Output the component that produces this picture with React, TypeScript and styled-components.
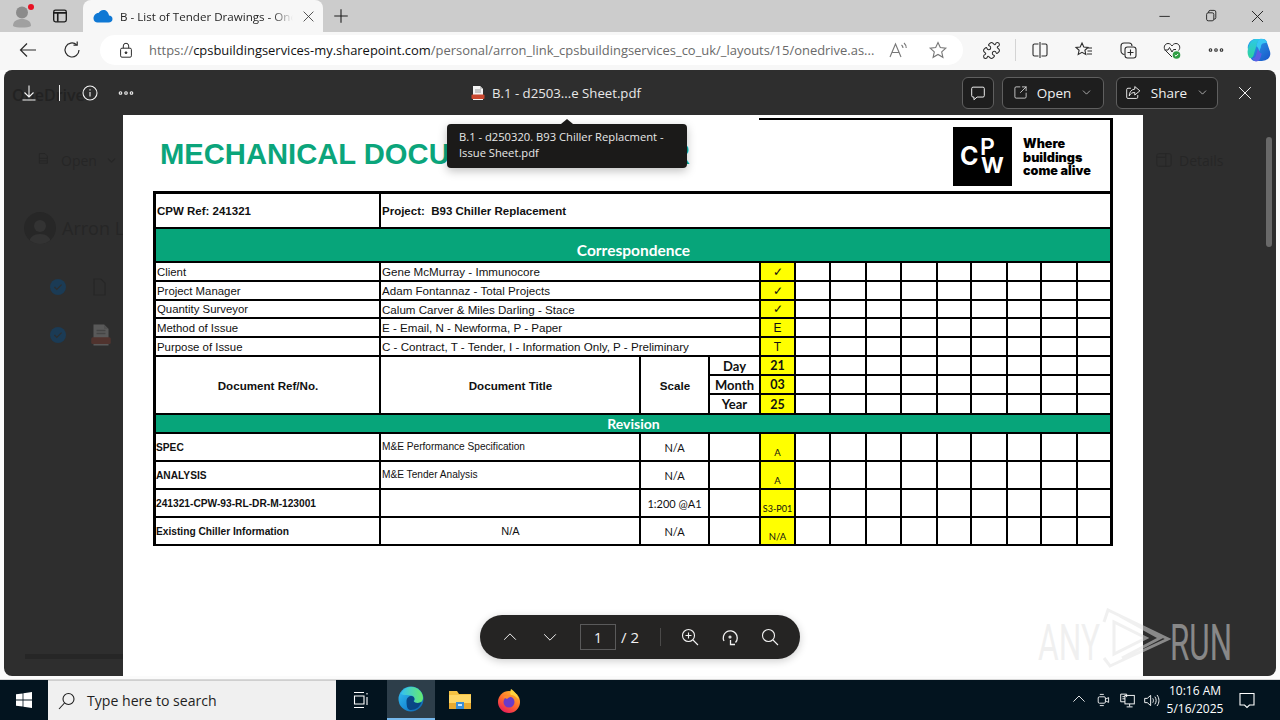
import React from 'react';
import styled, { createGlobalStyle } from 'styled-components';
import { ChevronDown, Puzzle, SquareArrowOutUpRight } from 'lucide-react';

const GlobalStyle = createGlobalStyle`
  html, body {
    margin: 0;
    padding: 0;
    overflow: hidden;
    background: #f7f7f7;
    font-family: "Open Sans", "Liberation Sans", sans-serif;
  }
  * { box-sizing: border-box; }
`;

const Screen = styled.div`
  width: 1280px;
  height: 720px;
  display: flex;
  flex-direction: column;
  overflow: hidden;
`;

const Glyph = styled.svg.attrs<{ $size?: number }>((p) => ({
  width: p.$size ?? 20,
  height: p.$size ?? 20,
  viewBox: '0 0 20 20',
  fill: 'none',
  stroke: 'currentColor',
  strokeWidth: 1.1,
}))<{ $size?: number }>`
  display: block;
  flex: none;
`;

/* browser chrome */
const TabBar = styled.div`
  height: 32px;
  flex: none;
  display: flex;
  align-items: flex-end;
  background: #cccccc;
  color: #1c1c1c;
`;

const Slot = styled.div<{ $w: number }>`
  width: ${(p) => p.$w}px;
  height: 32px;
  flex: none;
  display: flex;
  align-items: center;
  justify-content: center;
`;

const Profile = styled(Slot)`
  position: relative;
`;

const RedDot = styled.span`
  position: absolute;
  left: 28px;
  top: 4px;
  width: 6px;
  height: 6px;
  border-radius: 50%;
  background: #e81123;
`;

const Tab = styled.div`
  width: 240px;
  height: 32px;
  margin-left: 7px;
  flex: none;
  display: flex;
  align-items: center;
  padding-left: 10px;
  background: #f7f7f7;
  border-radius: 8px 8px 0 0;
`;

const TabTitle = styled.div`
  width: 173px;
  margin-left: 7px;
  font-size: 11.6px;
  color: #262626;
  white-space: nowrap;
  overflow: hidden;
  mask-image: linear-gradient(to right, #000 88%, transparent 100%);
`;

const TabClose = styled.div`
  margin-left: 8px;
  color: #333;
`;

const Spacer = styled.div`
  flex: 1;
`;

const AddressBar = styled.div`
  height: 38px;
  flex: none;
  display: flex;
  align-items: center;
  background: #f7f7f7;
  color: #2b2b2b;
  padding-left: 6px;
  padding-bottom: 2px;
`;

const UrlPill = styled.div`
  width: 863px;
  height: 30px;
  margin-left: 6px;
  margin-right: 6px;
  flex: none;
  display: flex;
  align-items: center;
  padding-left: 17px;
  background: #ffffff;
  border-radius: 15px;
`;

const UrlText = styled.div`
  width: 728px;
  margin-left: 14px;
  font-size: 12.95px;
  color: #6a6a6a;
  white-space: nowrap;
  overflow: hidden;
  b {
    font-weight: 400;
    color: #111;
  }
`;

const UrlIcons = styled.div`
  display: flex;
  align-items: center;
  gap: 20px;
  margin-left: 11px;
  color: #777;
`;

const BarSlot = styled(Slot)`
  height: 30px;
`;

const BarDivider = styled.div`
  width: 1px;
  height: 22px;
  margin: 0 2px;
  flex: none;
  background: #d4d4d4;
`;

/* viewer */
const Main = styled.div`
  flex: 1;
  min-height: 0;
  padding: 0 4px 3px;
  background: #fbfbfb;
  border-bottom: 1px solid #d8d8d8;
`;

const Viewer = styled.div`
  position: relative;
  height: 100%;
  display: flex;
  flex-direction: column;
  background: #2e2e2e;
  border-radius: 8px;
  overflow: hidden;
`;

const Toolbar = styled.div`
  position: relative;
  height: 45px;
  flex: none;
  display: flex;
  align-items: center;
  color: #f4f4f4;
`;

const ToolsLeft = styled.div`
  width: 466px;
  flex: none;
  display: flex;
  align-items: center;
  padding-left: 9px;
`;

const GhostBrand = styled.div`
  position: absolute;
  left: 8px;
  top: 14px;
  font-size: 16px;
  font-weight: 600;
  color: #222;
`;

const ToolSlot = styled.div<{ $ml?: number }>`
  position: relative;
  width: 32px;
  height: 32px;
  margin-left: ${(p) => p.$ml ?? 0}px;
  display: flex;
  align-items: center;
  justify-content: center;
`;

const ToolDivider = styled.div`
  position: relative;
  width: 1px;
  height: 16px;
  margin-left: 14px;
  background: #e8e8e8;
`;

const FileName = styled.div`
  display: flex;
  align-items: center;
  gap: 6px;
  padding-top: 1px;
  font-size: 13.2px;
  color: #e8e8e8;
  white-space: nowrap;
`;

const ToolsRight = styled.div`
  margin-left: auto;
  padding-right: 15px;
  display: flex;
  align-items: center;
`;

const ToolButton = styled.div<{ $w: number; $ml: number }>`
  width: ${(p) => p.$w}px;
  height: 32px;
  margin-left: ${(p) => p.$ml}px;
  display: flex;
  align-items: center;
  justify-content: center;
  gap: 9px;
  font-size: 13.5px;
  color: #f0f0f0;
  background: #1e1e1e;
  border: 1px solid #5f5f5f;
  border-radius: 6px;
`;

const Body = styled.div`
  flex: 1;
  min-height: 0;
  display: flex;
`;

const LeftGutter = styled.div`
  width: 119px;
  flex: none;
  display: flex;
  flex-direction: column;
  overflow: hidden;
  color: #262626;
`;

const GhostCommand = styled.div`
  height: 20px;
  margin: 35px 0 0 33px;
  display: flex;
  align-items: center;
  gap: 8px;
  font-size: 14px;
  white-space: nowrap;
`;

const GhostPerson = styled.div`
  margin: 42px 0 0 20px;
  height: 32px;
  display: flex;
  align-items: center;
  gap: 6px;
  font-size: 18px;
  white-space: nowrap;
`;

const GhostAvatar = styled.div`
  width: 32px;
  height: 32px;
  flex: none;
  display: flex;
  align-items: flex-end;
  justify-content: center;
  border-radius: 50%;
  background: #272727;
  overflow: hidden;
  color: #333;
`;

const GhostFile = styled.div<{ $top: number }>`
  height: 24px;
  margin: ${(p) => p.$top}px 0 0 46px;
  display: flex;
  align-items: center;
  gap: 23px;
`;

const GhostTick = styled.div`
  width: 16px;
  height: 16px;
  flex: none;
  display: flex;
  align-items: center;
  justify-content: center;
  border-radius: 50%;
  background: #1b3b55;
  color: #2e2e2e;
`;

const GhostScroll = styled.div`
  height: 5px;
  margin: auto 0 17px 21px;
  background: #262626;
`;

const RightGutter = styled.div`
  flex: 1;
  display: flex;
  justify-content: space-between;
  padding: 22px 4px 0 12px;
  color: #262626;
`;

const GhostDetails = styled.div`
  height: 46px;
  display: flex;
  align-items: center;
  gap: 6px;
  font-size: 14px;
`;

const ScrollThumb = styled.div`
  width: 6px;
  height: 110px;
  border-radius: 3px;
  background: #696969;
`;

const Page = styled.div`
  width: 1020px;
  flex: none;
  padding-left: 30px;
  background: #ffffff;
`;

const Masthead = styled.div`
  width: 960px;
  height: 76px;
  display: flex;
  justify-content: space-between;
`;

const DocTitle = styled.h1`
  margin: 0;
  padding: 22px 0 0 7px;
  font: 700 29.2px/34px "Liberation Sans", Arial, sans-serif;
  color: #0ba57b;
  white-space: nowrap;
`;

const LogoBox = styled.div`
  width: 354px;
  height: 73px;
  margin-top: 3px;
  flex: none;
  display: flex;
  align-items: flex-start;
  padding: 7px 0 0 194px;
  border-top: 2px solid #000;
  border-right: 3px solid #000;
`;

const Tagline = styled.div`
  margin: 10px 0 0 11px;
  font: 900 12.6px/13.5px Inter, "Liberation Sans", sans-serif;
  color: #000;
  white-space: nowrap;
`;

const Sheet = styled.div`
  width: 960px;
  display: grid;
  grid-template-columns: 223px 258px 67px 49px 33px 33px 34px 33px 34px 32px 34px 32px 34px 32px;
  grid-template-rows: 33px 32px 17px 17px 16px 17px 17px 17px 17px 18px 17px 26px 26px 26px 26px;
  gap: 2px;
  padding: 3px 3px 2px;
  background: #000;
  font-family: "Liberation Sans", Arial, sans-serif;
  color: #111;
`;

const Cell = styled.div<{ $span?: number; $rows?: number }>`
  grid-column: span ${(p) => p.$span ?? 1};
  grid-row: span ${(p) => p.$rows ?? 1};
  min-width: 0;
  display: flex;
  align-items: center;
  padding-left: 1px;
  background: #fff;
  font-size: 11.4px;
  white-space: nowrap;
  overflow: hidden;
`;

const ValueCell = styled(Cell)`
  font-size: 11.6px;
`;

const ProjectCell = styled(Cell)`
  font-size: 11.5px;
  font-weight: 700;
`;

const RefCell = styled(Cell)`
  padding-left: 0;
  font-size: 10.2px;
  font-weight: 700;
`;

const HeadCell = styled(Cell)`
  justify-content: center;
  font-weight: 700;
  font-size: 11.6px;
`;

const Band = styled(Cell)<{ $size: number; $pt: number }>`
  grid-column: 1 / -1;
  justify-content: center;
  padding-top: ${(p) => p.$pt}px;
  background: #07a57a;
  color: #fff;
  font: 700 ${(p) => p.$size}px Lato, "Liberation Sans", sans-serif;
`;

const DateLabel = styled(Cell)`
  justify-content: center;
  padding: 0;
  font: 700 13px Lato, "Liberation Sans", sans-serif;
`;

const Mark = styled(Cell)<{ $strong?: boolean }>`
  justify-content: center;
  padding: 0;
  background: #ffff00;
  font: ${(p) => (p.$strong ? '700 12.5px Lato' : '400 12px "Liberation Sans"')}, sans-serif;
`;

const RevMark = styled(Mark)<{ $small?: boolean }>`
  align-items: flex-end;
  padding-bottom: 2px;
  font: 400 ${(p) => (p.$small ? 9 : 9.5)}px Lato, sans-serif;
`;

const TitleCell = styled(Cell)<{ $center?: boolean }>`
  justify-content: ${(p) => (p.$center ? 'center' : 'flex-start')};
  align-items: ${(p) => (p.$center ? 'center' : 'flex-start')};
  padding-top: ${(p) => (p.$center ? 0 : 7)}px;
  font-size: ${(p) => (p.$center ? 11 : 10.15)}px;
`;

const ScaleCell = styled(Cell)`
  justify-content: center;
  padding: 0;
  font: 400 11px Lato, sans-serif;
`;

const ToolTip = styled.div`
  position: absolute;
  left: 443px;
  top: 54px;
  width: 240px;
  height: 44px;
  padding: 5px 12px;
  border-radius: 4px;
  background: #1b1a19;
  box-shadow: 0 3px 10px rgba(0, 0, 0, 0.25);
  font-size: 11.2px;
  line-height: 16px;
  color: #e8e8e8;
  &::before {
    content: '';
    position: absolute;
    left: 114px;
    top: -5px;
    border-left: 6px solid transparent;
    border-right: 6px solid transparent;
    border-bottom: 5px solid #1b1a19;
  }
`;

const PageControl = styled.div`
  position: absolute;
  left: 476px;
  top: 545px;
  width: 320px;
  height: 44px;
  display: flex;
  align-items: center;
  padding-left: 10px;
  border-radius: 22px;
  background: #252423;
  box-shadow: 0 2px 8px rgba(0, 0, 0, 0.2);
  color: #f2f2f2;
  font-size: 14px;
`;

const PageSlot = styled.div<{ $ml?: number }>`
  width: 40px;
  height: 40px;
  margin-left: ${(p) => p.$ml ?? 0}px;
  flex: none;
  display: flex;
  align-items: center;
  justify-content: center;
`;

const PageInput = styled.div`
  width: 36px;
  height: 26px;
  margin-left: 10px;
  flex: none;
  display: flex;
  align-items: center;
  justify-content: center;
  border: 1px solid #5a5a5a;
`;

const PageTotal = styled.div`
  width: 44px;
  padding-left: 5px;
  flex: none;
  font-size: 15px;
`;

const PageDivider = styled.div`
  width: 1px;
  height: 18px;
  flex: none;
  background: #4b4a49;
`;

const Watermark = styled.svg`
  position: absolute;
  left: 1034px;
  top: 538px;
  pointer-events: none;
`;

/* taskbar */
const TaskBar = styled.div`
  height: 40px;
  flex: none;
  display: flex;
  align-items: center;
  background: #03141f;
  color: #fff;
`;

const StartSlot = styled.div`
  width: 48px;
  height: 40px;
  flex: none;
  display: flex;
  align-items: center;
  justify-content: center;
`;

const SearchBox = styled.div`
  width: 288px;
  height: 40px;
  flex: none;
  display: flex;
  align-items: center;
  gap: 10px;
  padding-left: 9px;
  background: #f0f0f0;
  border-top: 1px solid #cfcfcf;
  color: #1f1f1f;
  font-size: 14.1px;
`;

const TaskSlot = styled.div<{ $active?: boolean; $w: number; $ml?: number }>`
  width: ${(p) => p.$w}px;
  height: 40px;
  margin-left: ${(p) => p.$ml ?? 0}px;
  flex: none;
  display: flex;
  align-items: center;
  justify-content: center;
  background: ${(p) => (p.$active ? '#2d3e4a' : 'transparent')};
  border-bottom: ${(p) => (p.$active ? '2px solid #76b9ed' : 'none')};
`;

const Tray = styled.div`
  margin-left: auto;
  display: flex;
  align-items: center;
  padding-right: 13px;
`;

const TraySlot = styled.div`
  width: 24px;
  height: 40px;
  flex: none;
  display: flex;
  align-items: center;
  justify-content: center;
`;

const Clock = styled.div`
  width: 64px;
  text-align: center;
  font-size: 12px;
  line-height: 18px;
  white-space: nowrap;
`;

const NotifySlot = styled.div`
  width: 40px;
  display: flex;
  justify-content: center;
`;

/* drawn icons */
const Dots = () => (
  <Glyph stroke="none" fill="currentColor" $size={20}>
    <circle cx="4.5" cy="10" r="1.3" />
    <circle cx="10" cy="10" r="1.3" />
    <circle cx="15.5" cy="10" r="1.3" />
  </Glyph>
);

const Cross = ({ size = 20 }: { size?: number }) => (
  <Glyph $size={size}>
    <path d="M3.5 3.5l13 13M16.5 3.5l-13 13" />
  </Glyph>
);

const PdfIcon = ({ size = 16, dim = false }: { size?: number; dim?: boolean }) => (
  <svg width={size} height={size} viewBox="0 0 16 16" style={{ opacity: dim ? 0.22 : 1, flex: 'none' }}>
    <path d="M3 1h7l3 3v11H3z" fill="#f3f3f3" />
    <path d="M10 1v3h3" fill="#c8c8c8" />
    <path d="M5 5h6M5 7h6" stroke="#999" strokeWidth="1" />
    <rect x="1.5" y="9.5" width="13" height="4.5" rx="1" fill="#c9472e" />
  </svg>
);

const Edge = () => (
  <svg width="26" height="26" viewBox="0 0 26 26">
    <defs>
      <linearGradient id="edgeA" x1="0" y1="0" x2="1" y2="1">
        <stop offset="0" stopColor="#35c1f1" />
        <stop offset="0.55" stopColor="#1a8fd8" />
        <stop offset="1" stopColor="#0c59a4" />
      </linearGradient>
      <linearGradient id="edgeB" x1="0" y1="0" x2="1" y2="0">
        <stop offset="0" stopColor="#35c1f1" />
        <stop offset="1" stopColor="#66eb6e" />
      </linearGradient>
    </defs>
    <circle cx="13" cy="13" r="12.5" fill="url(#edgeA)" />
    <path d="M3 8c2-5 7-7.500 11-7 6 .5 11 5 11 11 0 3-2.500 5-5.500 5-2.500 0-4-1-4-1 2-2 1-6-2.500-6.500C9 9 5 9.500 3 8z" fill="url(#edgeB)" />
    <path d="M8.500 15c0-3 2.500-5 5-5 1.500 0 3 1 3 3 0 1-1 2-1 2s1 2 4 2c2 0 4-1 4-1-1.500 5-6 8-10.500 8-3 0-4.500-2-4.500-9z" fill="#083f7d" opacity="0.9" />
  </svg>
);

const Explorer = () => (
  <svg width="24" height="22" viewBox="0 0 24 22">
    <path d="M1 2h8l2 3h12v15H1z" fill="#f5c242" />
    <rect x="1" y="6" width="22" height="14" fill="#ffd766" />
    <rect x="1" y="14" width="22" height="6" fill="#e8a92f" />
    <rect x="8" y="13" width="8" height="7" fill="#3a8fd8" />
    <rect x="10" y="15" width="4" height="2" fill="#cfe8fb" />
  </svg>
);

const Firefox = () => (
  <svg width="24" height="25" viewBox="0 0 24 25">
    <defs>
      <linearGradient id="foxA" x1="0.8" y1="0" x2="0.2" y2="1">
        <stop offset="0" stopColor="#ffbd2e" />
        <stop offset="0.5" stopColor="#ff6b2c" />
        <stop offset="1" stopColor="#e8155f" />
      </linearGradient>
    </defs>
    <circle cx="12" cy="14" r="11" fill="url(#foxA)" />
    <path d="M14 1c3 2 7 6 8 11-2-3-5-5-8-5-1 0-1-3 0-6z" fill="#ffd23c" />
    <circle cx="12" cy="14" r="5.500" fill="#6a3bc9" />
    <path d="M6 9c3-2 7-2 9 0-3 0-4 1-5 2z" fill="#ff8a2c" />
  </svg>
);

const Copilot = () => (
  <svg width="24" height="24" viewBox="0 0 26 26">
    <defs>
      <linearGradient id="copA" x1="0" y1="0" x2="1" y2="1">
        <stop offset="0" stopColor="#2aa7ee" />
        <stop offset="1" stopColor="#1a55c8" />
      </linearGradient>
      <linearGradient id="copB" x1="0" y1="0" x2="0" y2="1">
        <stop offset="0" stopColor="#2dc7e8" />
        <stop offset="1" stopColor="#2fd39a" />
      </linearGradient>
    </defs>
    <path d="M9 1h8c4 0 4 3 5 5l3 9c1 4-1 8-5 9l-4 1H9c-4 0-5-3-6-6L1 12C0 7 4 1 9 1z" fill="url(#copA)" />
    <path d="M9 1h6c-3 1-4 4-5 8l-3 10c-1 2-2 3-4 3-2-2-3-6-2-10C2 7 5 1 9 1z" fill="url(#copB)" />
    <path d="M14 1c4-.5 7 1 8 4l-5 1c-1 .5-2 2-2 4l-2 5c-.5-3-1-5-3-6 1-4 2-7 4-8z" fill="#38c6f4" />
    <path d="M12 25c-3 1-5 0-6-3 2 0 3-1 3.500-3L12 11c.5 3 2 5 4 6-1 3-2 7-4 8z" fill="#5b5fe3" />
  </svg>
);

const contacts = [
  { label: 'Client', value: 'Gene McMurray - Immunocore', mark: '✓' },
  { label: 'Project Manager', value: 'Adam Fontannaz - Total Projects', mark: '✓' },
  { label: 'Quantity Surveyor', value: 'Calum Carver & Miles Darling - Stace', mark: '✓' },
  { label: 'Method of Issue', value: 'E - Email, N - Newforma, P - Paper', mark: 'E' },
  { label: 'Purpose of Issue', value: 'C - Contract, T - Tender, I - Information Only, P - Preliminary', mark: 'T' },
];

const dates = [
  { label: 'Day', value: '21' },
  { label: 'Month', value: '03' },
  { label: 'Year', value: '25' },
];

const documents = [
  { ref: 'SPEC', title: 'M&E Performance Specification', scale: 'N/A', rev: 'A' },
  { ref: 'ANALYSIS', title: 'M&E Tender Analysis', scale: 'N/A', rev: 'A' },
  { ref: '241321-CPW-93-RL-DR-M-123001', title: '', scale: '1:200 @A1', rev: 'S3-P01' },
  { ref: 'Existing Chiller Information', title: 'N/A', scale: 'N/A', rev: 'N/A', center: true },
];

const Blanks = () => (
  <>
    {Array.from({ length: 9 }, (_, i) => <Cell key={i} />)}
  </>
);

export default function App() {
  return (
    <Screen>
      <GlobalStyle />
      <TabBar>
        <Profile $w={44}>
          <svg width="24" height="26" viewBox="0 0 24 26">
            <circle cx="12" cy="9.500" r="6" fill="#8b8b8b" />
            <path d="M3 23c0-5 4-7 9-7s9 2 9 7c-3 2-15 2-18 0z" fill="#a0a0a0" />
          </svg>
          <RedDot />
        </Profile>
        <Slot $w={32}>
          <Glyph $size={18}>
            <rect x="3" y="3.500" width="14" height="13" rx="2" strokeWidth="1.500" />
            <path d="M3 6.500h14M7.500 6.500v10" strokeWidth="1.800" />
          </Glyph>
        </Slot>
        <Tab>
          <svg width="20" height="14" viewBox="0 0 20 14">
            <path d="M4.500 13.500h11c2.500 0 4-1.500 4-3.500S18 6.500 16 6.500C15.500 3 13 1 10.500 1 8 1 6.500 2.500 5.500 4 2.500 4 .5 6.500.5 9.500c0 2.500 2 4 4 4z" fill="#0f78d4" />
          </svg>
          <TabTitle>B - List of Tender Drawings - OneDrive</TabTitle>
          <TabClose><Cross size={15} /></TabClose>
        </Tab>
        <Slot $w={36}>
          <Glyph $size={18}><path d="M10 2.500v15M2.500 10h15" strokeWidth="1.200" /></Glyph>
        </Slot>
        <Spacer />
        <Slot $w={46}><Glyph $size={16}><path d="M3 10.500h13" /></Glyph></Slot>
        <Slot $w={46}>
          <Glyph $size={16}>
            <rect x="4.500" y="6" width="9" height="10" rx="2" />
            <path d="M7 6V5a2 2 0 0 1 2-2h5a2 2 0 0 1 2 2v7a2 2 0 0 1-2 2h-.5" />
          </Glyph>
        </Slot>
        <Slot $w={46}><Cross size={17} /></Slot>
      </TabBar>

      <AddressBar>
        <Slot $w={44}>
          <Glyph $size={20}><path d="M18 10H2.500M9 3.500L2.500 10 9 16.500" strokeWidth="1.200" /></Glyph>
        </Slot>
        <Slot $w={44}>
          <Glyph $size={20}>
            <path d="M17 10a7 7 0 1 1-2.400-5.300" strokeWidth="1.200" />
            <path d="M15.200 1.500v3.700h-3.700" strokeWidth="1.200" />
          </Glyph>
        </Slot>
        <UrlPill>
          <Glyph $size={18}>
            <rect x="4" y="8" width="12" height="10" rx="1.500" />
            <path d="M7 8V5.500a3 3 0 0 1 6 0V8" />
            <circle cx="10" cy="13" r="1" fill="currentColor" />
          </Glyph>
          <UrlText>https://<b>cpsbuildingservices-my.sharepoint.com</b>/personal/arron_link_cpsbuildingservices_co_uk/_layouts/15/onedrive.as...</UrlText>
          <UrlIcons>
            <Glyph $size={20}>
              <path d="M2 17L7.500 4 13 17M4 12.500h7" />
              <path d="M13.500 5c1 .8 1.500 2 1.500 3M16 3c1.500 1.300 2.200 3 2.200 5" />
            </Glyph>
            <Glyph $size={20}>
              <path d="M10 2.500l2.300 5 5.500.7-4.100 3.700 1.200 5.400-4.900-2.800-4.900 2.800 1.200-5.400-4.100-3.700 5.500-.7z" />
            </Glyph>
          </UrlIcons>
        </UrlPill>
        <BarSlot $w={44}><Puzzle size={19} strokeWidth={1.3} /></BarSlot>
        <BarDivider />
        <BarSlot $w={44}>
          <Glyph $size={20}>
            <path d="M8.500 4H4.500A1.500 1.500 0 0 0 3 5.500v9A1.500 1.500 0 0 0 4.500 16h4M11.500 4h4A1.500 1.500 0 0 1 17 5.500v9a1.500 1.500 0 0 1-1.500 1.500h-4M10 2v16" />
          </Glyph>
        </BarSlot>
        <BarSlot $w={44}>
          <Glyph $size={20}>
            <path d="M8 3l1.800 4 4.200.5-3.100 2.800.9 4.200L8 12.300l-3.800 2.200.9-4.200L2 7.500 6.200 7z" />
            <path d="M13.500 8H18M13.500 11H18M13 14h5" />
          </Glyph>
        </BarSlot>
        <BarSlot $w={44}>
          <Glyph $size={20}>
            <path d="M6.500 14.500A3.500 3.500 0 0 1 3 11V6a3 3 0 0 1 3-3h5a3 3 0 0 1 3 3" />
            <rect x="7" y="7" width="11" height="11" rx="2.500" />
            <path d="M12.500 9.500v6M9.500 12.500h6" />
          </Glyph>
        </BarSlot>
        <BarSlot $w={44}>
          <svg width="20" height="20" viewBox="0 0 20 20" fill="none" stroke="currentColor">
            <path d="M10 17L3.500 10.500C1 8 2.500 3.500 6 3.500c2 0 3 1 4 2.500 1-1.500 2-2.500 4-2.500 3.500 0 5 4.500 2.500 7" />
            <path d="M2.500 10h3.500l1.500-2.500L10 12l1.500-2.500H14" />
            <circle cx="14.500" cy="15" r="3.800" fill="#2f9e44" stroke="none" />
            <path d="M12.800 15l1.200 1.200 2.200-2.300" stroke="#fff" />
          </svg>
        </BarSlot>
        <BarSlot $w={43}><Dots /></BarSlot>
        <BarSlot $w={43}><Copilot /></BarSlot>
      </AddressBar>

      <Main>
        <Viewer>
          <Toolbar>
            <GhostBrand>OneDrive</GhostBrand>
            <ToolsLeft>
              <ToolSlot>
                <Glyph $size={20}><path d="M10 2.500v11M5.500 9.500L10 14l4.500-4.500M3.500 17h13" /></Glyph>
              </ToolSlot>
              <ToolDivider />
              <ToolSlot $ml={14}>
                <Glyph $size={20}>
                  <circle cx="10" cy="10" r="7" />
                  <path d="M10 9v4.500M10 6.300v1.200" />
                </Glyph>
              </ToolSlot>
              <ToolSlot $ml={4}><Dots /></ToolSlot>
            </ToolsLeft>
            <FileName>
              <PdfIcon />
              B.1 - d2503...e Sheet.pdf
            </FileName>
            <ToolsRight>
              <ToolButton $w={32} $ml={0}>
                <Glyph $size={18}>
                  <path d="M4.500 3.500h11A1.500 1.500 0 0 1 17 5v8a1.500 1.500 0 0 1-1.500 1.500H9l-3.500 3v-3h-1A1.500 1.500 0 0 1 3 13V5a1.500 1.500 0 0 1 1.500-1.500z" />
                </Glyph>
              </ToolButton>
              <ToolButton $w={102} $ml={8}>
                <SquareArrowOutUpRight size={15} strokeWidth={1.2} />
                Open
                <ChevronDown size={13} strokeWidth={1.2} />
              </ToolButton>
              <ToolButton $w={102} $ml={12}>
                <Glyph $size={17}>
                  <path d="M7 5H3.500A1.500 1.500 0 0 0 2 6.500v9A1.500 1.500 0 0 0 3.500 17h10a1.500 1.500 0 0 0 1.500-1.500V13" />
                  <path d="M11.500 3l6 5-6 5v-3C8.500 10 6.500 11 5 14c0-4 2-7.500 6.500-8z" />
                </Glyph>
                Share
                <ChevronDown size={13} strokeWidth={1.2} />
              </ToolButton>
              <ToolSlot $ml={11}><Cross size={18} /></ToolSlot>
            </ToolsRight>
          </Toolbar>

          <Body>
            <LeftGutter>
              <GhostCommand>
                <Glyph $size={16}><path d="M3 2h7l3 3v9H3zM3 8h10M3 11h10" /></Glyph>
                Open
                <ChevronDown size={13} />
              </GhostCommand>
              <GhostPerson>
                <GhostAvatar>
                  <svg width="24" height="26" viewBox="0 0 24 26" fill="currentColor">
                    <circle cx="12" cy="8" r="6" />
                    <path d="M1 26c0-7 5-10 11-10s11 3 11 10z" />
                  </svg>
                </GhostAvatar>
                Arron Li
              </GhostPerson>
              <GhostFile $top={31}>
                <GhostTick><Glyph $size={12}><path d="M4 10l4 4 8-8" strokeWidth="2" /></Glyph></GhostTick>
                <Glyph $size={20}><path d="M5 2h7l4 4v12H5z" /></Glyph>
              </GhostFile>
              <GhostFile $top={24}>
                <GhostTick><Glyph $size={12}><path d="M4 10l4 4 8-8" strokeWidth="2" /></Glyph></GhostTick>
                <PdfIcon size={24} dim />
              </GhostFile>
              <GhostScroll />
            </LeftGutter>

            <Page>
              <Masthead>
                <DocTitle>MECHANICAL DOCUMENT REGISTER</DocTitle>
                <LogoBox>
                  <svg width="59" height="59" viewBox="0 0 59 59">
                    <rect width="59" height="59" fill="#000" />
                    <text x="7" y="38" fontFamily="Inter, sans-serif" fontWeight="700" fontSize="25" fill="#fff">C</text>
                    <text x="27" y="28" fontFamily="Inter, sans-serif" fontWeight="600" fontSize="23" fill="#fff">P</text>
                    <text x="28" y="46" fontFamily="Inter, sans-serif" fontWeight="700" fontSize="22" fill="#fff">W</text>
                  </svg>
                  <Tagline>Where<br />buildings<br />come alive</Tagline>
                </LogoBox>
              </Masthead>

              <Sheet>
                <ProjectCell>CPW Ref: 241321</ProjectCell>
                <ProjectCell $span={13}>Project:&nbsp; B93 Chiller Replacement</ProjectCell>
                <Band $size={15.5} $pt={10}>Correspondence</Band>
                {contacts.map((row) => (
                  <React.Fragment key={row.label}>
                    <Cell>{row.label}</Cell>
                    <ValueCell $span={3}>{row.value}</ValueCell>
                    <Mark>{row.mark}</Mark>
                    <Blanks />
                  </React.Fragment>
                ))}
                <HeadCell $rows={3}>Document Ref/No.</HeadCell>
                <HeadCell $rows={3}>Document Title</HeadCell>
                <HeadCell $rows={3}>Scale</HeadCell>
                {dates.map((row) => (
                  <React.Fragment key={row.label}>
                    <DateLabel>{row.label}</DateLabel>
                    <Mark $strong>{row.value}</Mark>
                    <Blanks />
                  </React.Fragment>
                ))}
                <Band $size={14} $pt={0}>Revision</Band>
                {documents.map((row) => (
                  <React.Fragment key={row.ref}>
                    <RefCell>{row.ref}</RefCell>
                    <TitleCell $center={row.center}>{row.title}</TitleCell>
                    <ScaleCell>{row.scale}</ScaleCell>
                    <Cell />
                    <RevMark $small={row.rev.length > 3}>{row.rev}</RevMark>
                    <Blanks />
                  </React.Fragment>
                ))}
              </Sheet>
            </Page>

            <RightGutter>
              <GhostDetails>
                <Glyph $size={18}><rect x="2" y="3" width="16" height="14" rx="2" /><path d="M12 3v14M2 7h10" /></Glyph>
                Details
              </GhostDetails>
              <ScrollThumb />
            </RightGutter>
          </Body>

          <ToolTip>B.1 - d250320. B93 Chiller Replacment - Issue Sheet.pdf</ToolTip>

          <PageControl>
            <PageSlot>
              <Glyph $size={18}><path d="M3.500 13L10 6.500 16.500 13" /></Glyph>
            </PageSlot>
            <PageSlot>
              <Glyph $size={18}><path d="M3.500 7L10 13.500 16.500 7" /></Glyph>
            </PageSlot>
            <PageInput>1</PageInput>
            <PageTotal>/ 2</PageTotal>
            <PageDivider />
            <PageSlot $ml={9}>
              <Glyph $size={20}>
                <circle cx="8.500" cy="8.500" r="6" />
                <path d="M13 13l5 5M8.500 5.500v6M5.500 8.500h6" />
              </Glyph>
            </PageSlot>
            <PageSlot>
              <Glyph $size={20}>
                <path d="M4 14a7 7 0 1 1 11.500 1.500" strokeWidth="1.300" />
                <path d="M10.500 13v4.500H15" strokeWidth="1.300" />
                <circle cx="10" cy="10" r="1" />
              </Glyph>
            </PageSlot>
            <PageSlot>
              <Glyph $size={20}>
                <circle cx="8.500" cy="8.500" r="6" />
                <path d="M13 13l5 5" />
              </Glyph>
            </PageSlot>
          </PageControl>

          <Watermark width="196" height="62" viewBox="0 0 196 62" fill="none">
            <text x="0" y="52" textLength="62" lengthAdjust="spacingAndGlyphs" fontFamily="Roboto, sans-serif" fontSize="50" fill="rgba(226,226,226,.51)">ANY</text>
            <path d="M66 14L70 2 130 31 72 58 66 50M76 14V46L108 30zM82 8L122 30 84 50" stroke="rgba(226,226,226,.51)" strokeWidth="3" />
            <text x="132" y="52" textLength="62" lengthAdjust="spacingAndGlyphs" fontFamily="Roboto, sans-serif" fontSize="50" fill="rgba(226,226,226,.51)">RUN</text>
          </Watermark>
        </Viewer>
      </Main>

      <TaskBar>
        <StartSlot>
          <svg width="16" height="16" viewBox="0 0 16 16" fill="#fff">
            <path d="M0 2.300L6.600 1.400V7.600H0zM7.400 1.300L16 0V7.600H7.400zM0 8.400H6.600V14.600L0 13.700zM7.400 8.400H16V16L7.400 14.700z" />
          </svg>
        </StartSlot>
        <SearchBox>
          <Glyph $size={20} strokeWidth={1.2}>
            <circle cx="11.500" cy="8" r="5.500" />
            <path d="M7.500 12L2 18" />
          </Glyph>
          Type here to search
        </SearchBox>
        <TaskSlot $w={48}>
          <Glyph $size={20}>
            <path d="M4 2.500h10M4 17.500h10M4.500 6h9.500v8H4.500zM17 3v1.500M17 7v8" />
          </Glyph>
        </TaskSlot>
        <TaskSlot $w={48} $ml={3} $active><Edge /></TaskSlot>
        <TaskSlot $w={50}><Explorer /></TaskSlot>
        <TaskSlot $w={48}><Firefox /></TaskSlot>
        <Tray>
          <TraySlot>
            <Glyph $size={16}><path d="M3 12l7-7 7 7" /></Glyph>
          </TraySlot>
          <TraySlot>
            <Glyph $size={16}>
              <rect x="4" y="6" width="9" height="8" rx="1.500" />
              <path d="M13 9l4-2v6l-4-2M6 3h5M6 17h5" />
            </Glyph>
          </TraySlot>
          <TraySlot>
            <Glyph $size={17}>
              <rect x="7" y="4" width="11" height="10" />
              <path d="M2 2.500h7V6M2 2.500v9h5M4 5.500h3M4 8h3M12.500 14v3M9 17.500h7" />
            </Glyph>
          </TraySlot>
          <TraySlot>
            <Glyph $size={17}>
              <path d="M2 7.500h3L9 4v12l-4-3.500H2zM11.500 7.500c1 1.500 1 3.500 0 5M14 5.500c2 3 2 6 0 9M16.500 3.500c3 4 3 9 0 13" />
            </Glyph>
          </TraySlot>
          <Clock>10:16 AM<br />5/16/2025</Clock>
          <NotifySlot>
            <Glyph $size={20}>
              <path d="M3 3.500h14V15h-4.500L10 17.500 7.500 15H3z" />
            </Glyph>
          </NotifySlot>
        </Tray>
      </TaskBar>
    </Screen>
  );
}
